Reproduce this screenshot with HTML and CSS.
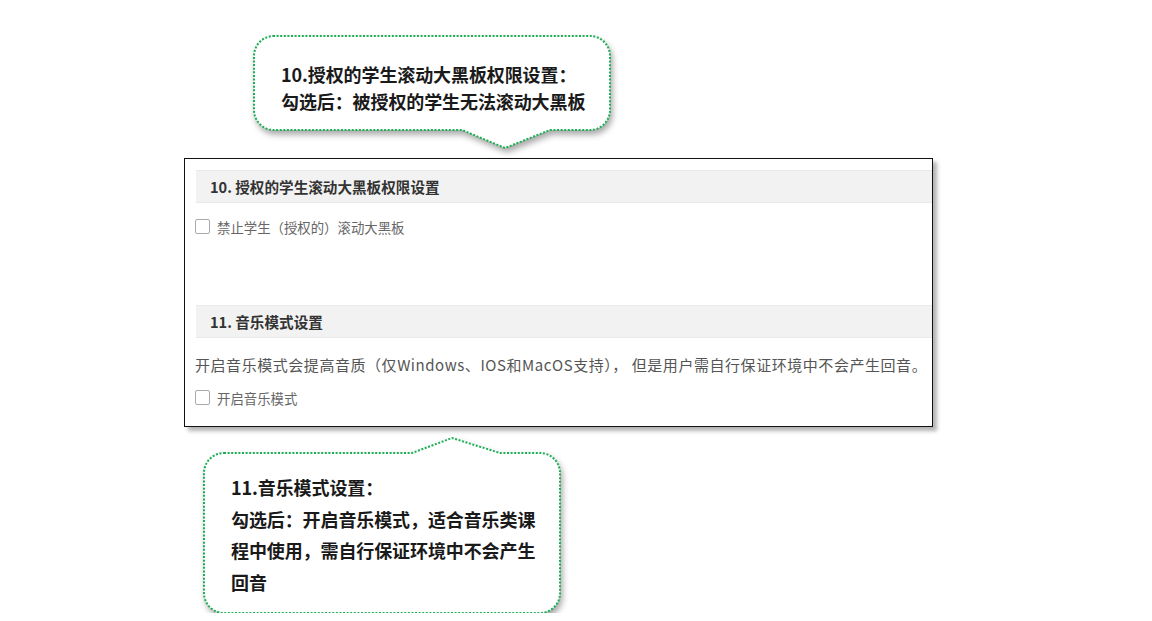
FILE: index.html
```html
<!DOCTYPE html>
<html lang="zh-CN">
<head>
    <meta charset="UTF-8">
    <title>大黑板权限与音乐模式设置</title>
    <link rel="stylesheet" href="styles.css">
</head>
<body>
    <div class="page">
        <!-- callout above the settings shot -->
        <div class="callout callout-top">
            <svg class="callout-shape" width="358" height="114" viewBox="0 0 358 114">
                <path d="M20,1 H337 A20,20 0 0 1 357,21 V75 A20,20 0 0 1 337,95 H297 L252,113 L209,95 H21 A20,20 0 0 1 1,75 V21 A20,20 0 0 1 21,1 Z"/>
            </svg>
            <p class="callout-text">10.授权的学生滚动大黑板权限设置：<br>勾选后：被授权的学生无法滚动大黑板</p>
        </div>

        <div class="shot">
            <div class="section-title">10. 授权的学生滚动大黑板权限设置</div>
            <label class="check"><span class="check-box"></span>禁止学生（授权的）滚动大黑板</label>

            <div class="section-title second">11. 音乐模式设置</div>
            <p class="desc">开启音乐模式会提高音质（仅Windows、IOS和MacOS支持）， 但是用户需自行保证环境中不会产生回音。</p>
            <label class="check check-music"><span class="check-box"></span>开启音乐模式</label>
        </div>

        <!-- callout below the settings shot -->
        <div class="callout callout-bottom">
            <svg class="callout-shape" width="358" height="177" viewBox="0 0 358 177">
                <path d="M21,16 H209 L249,1 L297,16 H337 A20,20 0 0 1 357,36 V156 A20,20 0 0 1 337,176 H21 A20,20 0 0 1 1,156 V36 A20,20 0 0 1 21,16 Z"/>
            </svg>
            <p class="callout-text">11.音乐模式设置：<br>勾选后：开启音乐模式，适合音乐类课<br>程中使用，需自行保证环境中不会产生<br>回音</p>
        </div>
    </div>
</body>
</html>
```

FILE: styles.css
```css
* { box-sizing: border-box; }
body { margin: 0; background: #fff; font-family: "Noto Sans CJK SC", "Noto Sans", sans-serif; color: #222; }

.page { display: flex; flex-direction: column; align-items: flex-start; }

/* Callouts */
.callout { position: relative; width: 358px; }
.callout-shape { position: absolute; left: 0; top: 0; overflow: visible; filter: drop-shadow(2px 4px 3px rgba(0, 0, 0, 0.35)); }
.callout-shape path { fill: #fff; stroke: #1cb055; stroke-width: 2; stroke-dasharray: 2 1.6; }
.callout-text { position: relative; margin: 0; font-size: 18px; font-weight: bold; color: #1a1a1a; white-space: nowrap; letter-spacing: -0.1px; }

.callout-top { margin: 35px 0 0 253px; height: 113px; }
.callout-top .callout-text { padding: 26px 0 0 28px; line-height: 27px; }

.callout-bottom { margin: 10px 0 0 203px; height: 176px; }
.callout-bottom .callout-text { padding: 35px 0 0 28px; line-height: 31.5px; }

/* Settings screenshot */
.shot { margin: 10px 0 0 184px; width: 749px; border: 1px solid #111; background: #fff; padding: 11px 0 21px 10px; box-shadow: 4px 4px 4px rgba(0, 0, 0, 0.3); }

.section-title { margin-left: 1px; height: 33px; line-height: 31px; padding-left: 14px; background: #f2f2f2; border-top: 1px solid #e9e9e9; border-bottom: 1px solid #e9e9e9; font-size: 14.6px; font-weight: bold; color: #333; }
.section-title.second { margin-top: 71px; }

.check { display: flex; align-items: center; gap: 7px; margin-top: 16px; height: 15px; font-size: 13.4px; color: #666; }
.check-box { flex-shrink: 0; width: 15px; height: 15px; border: 1px solid #aaa; border-radius: 2px; background: #fff; }
.check-music { margin-top: 15px; }

.desc { margin: 17px 0 0; line-height: 20px; font-size: 15px; letter-spacing: 0.55px; color: #555; white-space: nowrap; }
```
